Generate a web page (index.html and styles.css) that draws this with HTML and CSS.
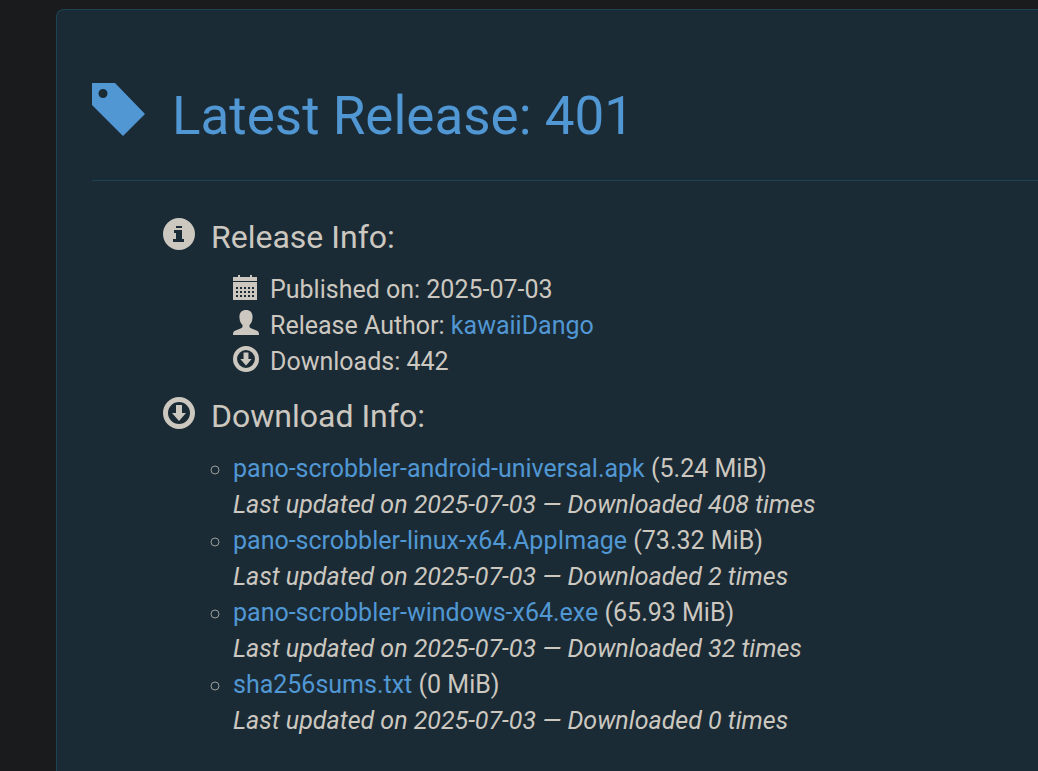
FILE: index.html
```
<!DOCTYPE html>
<html lang="en">
<head>
<meta charset="utf-8">
<meta name="viewport" content="width=device-width, initial-scale=1">
<title>Latest Release: 401</title>
<link rel="stylesheet" href="styles.css">
</head>
<body>
<svg class="sprite" aria-hidden="true">
  <symbol id="download" viewBox="0 0 32 32">
    <path fill-rule="evenodd" d="M16 0a16 16 0 1 0 0 32a16 16 0 0 0 0-32zM16 5a11 11 0 1 1 0 22a11 11 0 0 1 0-22z"/>
    <path d="M13 8h6v8h4l-7 8-7-8h4z"/>
  </symbol>
</svg>
<main class="release">
  <h1 class="title">
    <svg class="title-icon" viewBox="0 0 54 54" aria-hidden="true"><path fill-rule="evenodd" d="M0 0h23l30 31-22 22L0 22zM11 6a4.500 4.500 0 1 0 0 9a4.500 4.500 0 0 0 0-9z"/></svg>
    <a href="#release">Latest Release: 401</a>
  </h1>
  <hr class="rule">
  <section class="section">
    <h2 class="heading">
      <svg class="heading-icon" viewBox="0 0 32 32" aria-hidden="true"><path fill-rule="evenodd" d="M16 0a16 16 0 1 0 0 32a16 16 0 0 0 0-32zM13 8h6v2h-6zM11 12h8v9h2v3H10v-3h3v-6h-2z"/></svg>
      Release Info:
    </h2>
    <ul class="facts">
      <li class="fact">
        <svg class="fact-icon" viewBox="0 0 26 26" aria-hidden="true"><path fill-rule="evenodd" d="M0 3h5V1h2v2h10V1h2v2h5v4H0zM0 8h24v18H0zM3 13v2h2v-2zM7 13v2h2v-2zM11 13v2h2v-2zM15 13v2h2v-2zM19 13v2h2v-2zM3 17v2h2v-2zM7 17v2h2v-2zM11 17v2h2v-2zM15 17v2h2v-2zM19 17v2h2v-2zM3 21v2h2v-2zM7 21v2h2v-2zM11 21v2h2v-2zM15 21v2h2v-2zM19 21v2h2v-2z"/></svg>
        <span>Published on: 2025-07-03</span>
      </li>
      <li class="fact">
        <svg class="fact-icon" viewBox="0 0 26 26" aria-hidden="true"><path d="M13 0c4.500 0 7 3 6.500 8c-.3 3.500-1 5-3 7v1.500c0 1 .8 1.500 2 2l5.500 2.200c1.500.7 2 1.800 2 4.300H0c0-2.500.5-3.600 2-4.300l5.500-2.200c1.200-.5 2-1 2-2V15c-2-2-2.700-3.500-3-7c-.5-5 2-8 6.500-8z"/></svg>
        <span>Release Author: <a href="#author">kawaiiDango</a></span>
      </li>
      <li class="fact">
        <svg class="fact-icon" aria-hidden="true"><use href="#download"/></svg>
        <span>Downloads: 442</span>
      </li>
    </ul>
    <h2 class="heading">
      <svg class="heading-icon" aria-hidden="true"><use href="#download"/></svg>
      Download Info:
    </h2>
    <ul class="files">
      <li><a href="#apk">pano-scrobbler-android-universal.apk</a> (5.24 MiB)<br><i>Last updated on 2025-07-03 — Downloaded 408 times</i></li>
      <li><a href="#appimage">pano-scrobbler-linux-x64.AppImage</a> (73.32 MiB)<br><i>Last updated on 2025-07-03 — Downloaded 2 times</i></li>
      <li><a href="#exe">pano-scrobbler-windows-x64.exe</a> (65.93 MiB)<br><i>Last updated on 2025-07-03 — Downloaded 32 times</i></li>
      <li><a href="#sums">sha256sums.txt</a> (0 MiB)<br><i>Last updated on 2025-07-03 — Downloaded 0 times</i></li>
    </ul>
  </section>
</main>
</body>
</html>
```
FILE: styles.css
```
* { box-sizing: border-box; }

body {
  margin: 0;
  min-height: 100vh;
  padding: 9px 0 0 56px;
  display: flex;
  flex-direction: column;
  background: #1a1b1c;
  color: #ccc8c0;
  font: 25px/36px Roboto, "Liberation Sans", sans-serif;
  overflow: hidden;
}

.sprite { display: none; }

svg { fill: currentColor; flex: none; }

a { color: #5097d3; text-decoration: none; }

.release {
  flex: 1;
  padding: 73px 0 0 35px;
  background: #1b2b36;
  border: 1px solid #1e4354;
  border-width: 1px 0 0 1px;
  border-top-left-radius: 8px;
}

.title {
  display: flex;
  align-items: flex-start;
  gap: 26px;
  margin: 0;
  color: #5097d3;
  font-size: 53px;
  font-weight: 400;
  line-height: 66px;
}

.title-icon { width: 54px; height: 54px; }

.rule {
  height: 1px;
  margin: 31px 0 37px;
  border: 0;
  background: #1e4354;
}

.section { padding-left: 71px; }

.heading {
  display: flex;
  align-items: flex-start;
  gap: 16px;
  margin: 0 0 16px;
  font-size: 32px;
  font-weight: 400;
  line-height: 38px;
}

.heading-icon { width: 32px; height: 32px; }

.facts {
  margin: 0 0 17px;
  padding: 0 0 0 70px;
  list-style: none;
}

.fact { display: flex; align-items: flex-start; gap: 11px; }

.fact-icon { width: 26px; height: 26px; margin-top: 2px; }

.files {
  margin: 0;
  padding: 0 0 0 70px;
  list-style: circle;
}

.files li::marker { color: #9a9c9a; }
```
